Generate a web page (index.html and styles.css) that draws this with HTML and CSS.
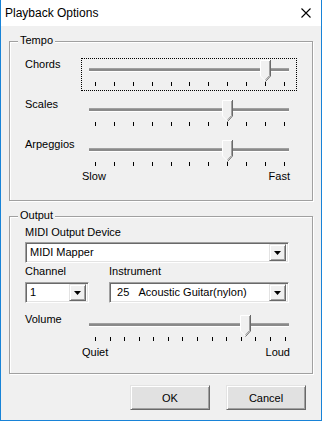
FILE: index.html
```html
<!DOCTYPE html>
<html lang="en">
<head>
    <meta charset="UTF-8">
    <link rel="stylesheet" href="styles.css">
    <title>Playback Options</title>
</head>
<body>
<div class="window">
    <div class="titlebar">
        <span class="title">Playback Options</span>
        <svg class="close" width="10" height="10" viewBox="0 0 10 10">
            <path d="M0.5 0.5 L9.5 9.5 M9.5 0.5 L0.5 9.5" stroke="#000" stroke-width="1.1" fill="none"/>
        </svg>
    </div>

    <div class="group tempo">
        <div class="group-title">Tempo</div>

        <div class="rows">
            <div class="row">
                <span class="row-label">Chords</span>
                <div class="slider focused">
                    <div class="channel"></div>
                    <div class="ticks">
                        <i></i><i></i><i></i><i></i><i></i><i></i><i></i><i></i><i></i><i></i><i></i>
                    </div>
                    <svg class="thumb" style="left:178px" width="11" height="22" viewBox="0 0 11 22">
                        <path d="M0 0 H11 V16 L5.5 21.5 L0 16 Z" fill="#f0f0f0"/>
                        <path d="M0.5 16 V0.5 H10" stroke="#fff" fill="none"/>
                        <path d="M0.5 16 L5.5 21" stroke="#fff" fill="none"/>
                        <path d="M10.5 0 V16 L5.5 21.5" stroke="#696969" fill="none"/>
                        <path d="M9.5 1 V15.5 L5.5 19.8" stroke="#a0a0a0" fill="none"/>
                    </svg>
                </div>
            </div>
            <div class="row">
                <span class="row-label">Scales</span>
                <div class="slider">
                    <div class="channel"></div>
                    <div class="ticks">
                        <i></i><i></i><i></i><i></i><i></i><i></i><i></i><i></i><i></i><i></i><i></i>
                    </div>
                    <svg class="thumb" style="left:140px" width="11" height="22" viewBox="0 0 11 22">
                        <path d="M0 0 H11 V16 L5.5 21.5 L0 16 Z" fill="#f0f0f0"/>
                        <path d="M0.5 16 V0.5 H10" stroke="#fff" fill="none"/>
                        <path d="M0.5 16 L5.5 21" stroke="#fff" fill="none"/>
                        <path d="M10.5 0 V16 L5.5 21.5" stroke="#696969" fill="none"/>
                        <path d="M9.5 1 V15.5 L5.5 19.8" stroke="#a0a0a0" fill="none"/>
                    </svg>
                </div>
            </div>
            <div class="row">
                <span class="row-label">Arpeggios</span>
                <div class="slider">
                    <div class="channel"></div>
                    <div class="ticks">
                        <i></i><i></i><i></i><i></i><i></i><i></i><i></i><i></i><i></i><i></i><i></i>
                    </div>
                    <svg class="thumb" style="left:140px" width="11" height="22" viewBox="0 0 11 22">
                        <path d="M0 0 H11 V16 L5.5 21.5 L0 16 Z" fill="#f0f0f0"/>
                        <path d="M0.5 16 V0.5 H10" stroke="#fff" fill="none"/>
                        <path d="M0.5 16 L5.5 21" stroke="#fff" fill="none"/>
                        <path d="M10.5 0 V16 L5.5 21.5" stroke="#696969" fill="none"/>
                        <path d="M9.5 1 V15.5 L5.5 19.8" stroke="#a0a0a0" fill="none"/>
                    </svg>
                </div>
            </div>
        </div>
        <div class="ends tempo-ends">
            <span>Slow</span>
            <span>Fast</span>
        </div>
    </div>

    <div class="group output">
        <div class="group-title">Output</div>

        <div class="field-label">MIDI Output Device</div>
        <div class="combo combo-device">
            <span class="combo-text">MIDI Mapper</span>
            <span class="combo-btn">
                <svg width="7" height="4" viewBox="0 0 7 4"><path d="M0 0 H7 L3.5 4 Z" fill="#000"/></svg>
            </span>
        </div>

        <div class="pair">
            <div class="pair-col">
                <div class="field-label small-gap">Channel</div>
                <div class="combo combo-channel">
                    <span class="combo-text">1</span>
                    <span class="combo-btn">
                        <svg width="7" height="4" viewBox="0 0 7 4"><path d="M0 0 H7 L3.5 4 Z" fill="#000"/></svg>
                    </span>
                </div>
            </div>
            <div class="pair-col">
                <div class="field-label small-gap">Instrument</div>
                <div class="combo combo-instrument">
                    <span class="combo-text">&nbsp;25&nbsp;&nbsp;&nbsp;Acoustic Guitar(nylon)</span>
                    <span class="combo-btn">
                        <svg width="7" height="4" viewBox="0 0 7 4"><path d="M0 0 H7 L3.5 4 Z" fill="#000"/></svg>
                    </span>
                </div>
            </div>
        </div>

        <div class="row volume-row">
            <span class="row-label">Volume</span>
            <div class="slider">
                <div class="channel"></div>
                <div class="ticks ticks-fine">
                    <i></i><i></i><i></i><i></i><i></i><i></i><i></i><i></i><i></i><i></i><i></i><i></i><i></i><i class="last"></i>
                </div>
                <svg class="thumb" style="left:158px" width="11" height="22" viewBox="0 0 11 22">
                    <path d="M0 0 H11 V16 L5.5 21.5 L0 16 Z" fill="#f0f0f0"/>
                    <path d="M0.5 16 V0.5 H10" stroke="#fff" fill="none"/>
                    <path d="M0.5 16 L5.5 21" stroke="#fff" fill="none"/>
                    <path d="M10.5 0 V16 L5.5 21.5" stroke="#696969" fill="none"/>
                    <path d="M9.5 1 V15.5 L5.5 19.8" stroke="#a0a0a0" fill="none"/>
                </svg>
            </div>
        </div>
        <div class="ends">
            <span>Quiet</span>
            <span>Loud</span>
        </div>
    </div>

    <div class="buttons">
        <button class="btn">OK</button>
        <button class="btn">Cancel</button>
    </div>
</div>
</body>
</html>
```

FILE: styles.css
```css
body {
    margin: 0;
    font-family: 'Liberation Sans', Arial, sans-serif;
    font-size: 11px;
    color: #000;
    background-color: #f0f0f0;
}

.window {
    width: 322px;
    height: 421px;
    box-sizing: border-box;
    border: 1px solid #1883d7;
    border-top: none;
    background-color: #f0f0f0;
}

.titlebar {
    height: 26px;
    background-color: #fff;
    display: flex;
    align-items: center;
    justify-content: space-between;
    padding: 0 10px 0 4px;
}

.title {
    font-size: 12px;
    line-height: 14px;
}

.close {
    display: block;
}

/* group boxes */
.group {
    margin: 15px 8px 0;
    border: 1px solid #a0a0a0;
    box-shadow: 1px 1px 0 #fff, inset 1px 1px 0 #fff;
    padding: 0 0 0 15px;
}

.group-title {
    width: fit-content;
    margin: -8px 0 0 -7px;
    padding: 0 2px;
    line-height: 13px;
    background-color: #f0f0f0;
}

.tempo {
    padding-bottom: 17px;
}

.output {
    padding-bottom: 14px;
}

/* trackbars */
.rows {
    display: flex;
    flex-direction: column;
    gap: 7px;
    margin-top: 11px;
}

.row {
    display: flex;
    align-items: flex-start;
}

.row-label {
    width: 56px;
    line-height: 13px;
}

.slider {
    position: relative;
    width: 216px;
    height: 33px;
    box-sizing: border-box;
    border: 1px dotted transparent;
}

.slider.focused {
    border-color: #000;
}

.channel {
    width: 200px;
    height: 4px;
    box-sizing: border-box;
    margin: 9px 0 0 7px;
    background-color: #8a8a8a;
    border-top: 1px solid #a0a0a0;
    border-bottom: 1px solid #fff;
}

.ticks {
    display: flex;
    justify-content: space-between;
    width: 190px;
    height: 4px;
    margin: 10px 0 0 13px;
}

.ticks i {
    width: 1px;
    height: 4px;
    background-color: #000;
}

.ticks-fine {
    justify-content: flex-start;
    gap: 14px;
}

.ticks-fine .last {
    margin-left: auto;
}

.thumb {
    position: absolute;
    top: 1px;
}

.ends {
    display: flex;
    justify-content: space-between;
    width: 208px;
    margin-left: 57px;
    line-height: 13px;
}

.tempo-ends {
    margin-top: -1px;
}

/* combo boxes */
.field-label {
    line-height: 13px;
    margin: 4px 0 3px;
}

.field-label.small-gap {
    margin: 2px 0 4px;
}

.combo {
    display: flex;
    align-items: center;
    height: 21px;
    box-sizing: border-box;
    padding: 2px;
    background-color: #fff;
    border: 1px solid;
    border-color: #a0a0a0 #fff #fff #a0a0a0;
    box-shadow: inset 1px 1px 0 #696969, inset -1px -1px 0 #e3e3e3;
}

.combo-device {
    width: 264px;
}

.combo-channel {
    width: 64px;
}

.combo-instrument {
    width: 180px;
}

.combo-text {
    flex: 1;
    padding-left: 2px;
    white-space: nowrap;
    line-height: 13px;
}

.combo-btn {
    width: 17px;
    height: 17px;
    box-sizing: border-box;
    display: flex;
    align-items: center;
    justify-content: center;
    background-color: #f0f0f0;
    border: 1px solid;
    border-color: #e3e3e3 #696969 #696969 #e3e3e3;
    box-shadow: inset 1px 1px 0 #fff, inset -1px -1px 0 #a0a0a0;
}

.combo-btn svg {
    display: block;
    margin-top: 1px;
}

.pair {
    display: flex;
    gap: 20px;
}

.volume-row {
    margin-top: 10px;
}

/* dialog buttons */
.buttons {
    display: flex;
    justify-content: flex-end;
    gap: 16px;
    margin-top: 11px;
    padding-right: 15px;
}

.btn {
    width: 80px;
    height: 25px;
    padding: 0;
    font-family: 'Liberation Sans', Arial, sans-serif;
    font-size: 11px;
    color: #000;
    background-color: #e1e1e1;
    border: 1px solid;
    border-color: #e3e3e3 #696969 #696969 #e3e3e3;
    box-shadow: inset 1px 1px 0 #fff, inset -1px -1px 0 #a0a0a0;
}
```
